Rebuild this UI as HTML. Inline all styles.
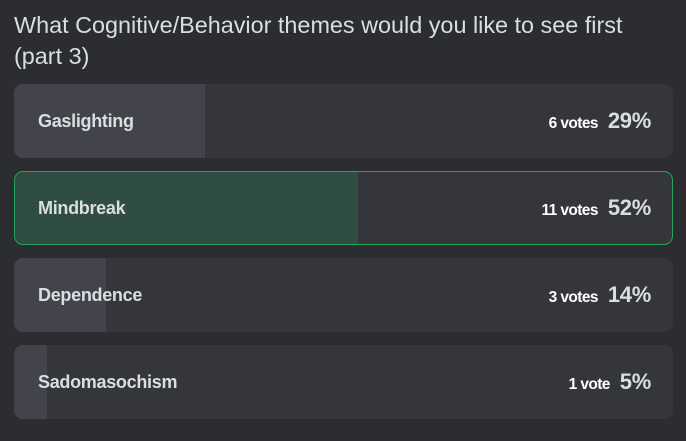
<!DOCTYPE html>
<html><head><style>
body{margin:0;width:686px;height:441px;background:#2b2d31;font-family:"Liberation Sans",sans-serif;overflow:hidden;position:relative}
.t{position:absolute;left:14px;top:10px;font-size:23.4px;line-height:31px;color:#dbdee1;white-space:nowrap}
.r{position:absolute;left:14px;width:659px;height:74px;background:#35363c;border-radius:9px;overflow:hidden;box-sizing:border-box}
.f{position:absolute;left:0;top:0;bottom:0;background:#43444b}
.l{position:absolute;left:24px;top:0;line-height:74px;font-size:18px;font-weight:bold;color:#dbdee1;letter-spacing:-0.3px}
.v{position:absolute;right:22px;top:0;line-height:74px;color:#fff;white-space:nowrap}
.v b{font-size:15.5px;margin-right:10px;letter-spacing:-0.6px}
.v span{font-size:22px;font-weight:bold;color:#dbdee1;letter-spacing:-0.3px}
.g{border:1px solid #23a55a;background:#35363c}
.g .f{background:#2f4d40}
.g .l{left:23px;top:-1px}.g .v{right:21px;top:-1px}
</style></head><body>
<div class="t">What Cognitive/Behavior themes would you like to see first<br>(part 3)</div>
<div class="r" style="top:84px"><div class="f" style="width:191px"></div><div class="l">Gaslighting</div><div class="v"><b>6 votes</b><span>29%</span></div></div>
<div class="r g" style="top:171px"><div class="f" style="width:343px"></div><div class="l">Mindbreak</div><div class="v"><b>11 votes</b><span>52%</span></div></div>
<div class="r" style="top:258px"><div class="f" style="width:92px"></div><div class="l">Dependence</div><div class="v"><b>3 votes</b><span>14%</span></div></div>
<div class="r" style="top:345px"><div class="f" style="width:33px"></div><div class="l">Sadomasochism</div><div class="v"><b>1 vote</b><span>5%</span></div></div>
</body></html>
